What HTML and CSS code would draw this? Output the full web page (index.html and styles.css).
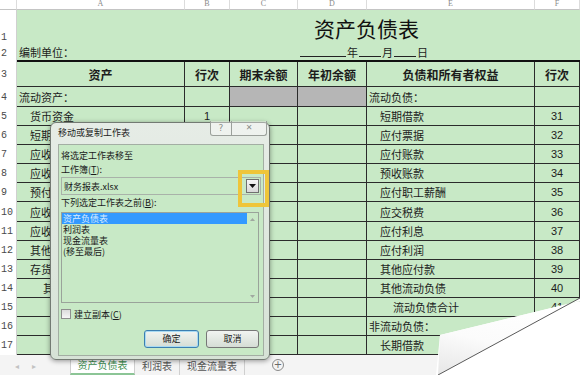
FILE: index.html
```html
<!DOCTYPE html>
<html lang="zh-CN">
<head>
  <meta charset="UTF-8" />
  <meta name="viewport" content="width=device-width, initial-scale=1.0" />
  <link rel="stylesheet" href="styles.css">
</head>
<body>
  <div class="sheet">
    <div class="ch"></div>
    <div class="ch">A</div><div class="ch">B</div><div class="ch">C</div><div class="ch">D</div><div class="ch">E</div><div class="ch">F</div>

    <div class="rh rh-low">1</div>
    <div class="c title">资产负债表</div>

    <div class="rh">2</div>
    <div class="c thick i0">编制单位：</div>
    <div class="c thick"></div>
    <div class="c thick"></div>
    <div class="c thick date"><span class="blank wide"></span>年<span class="blank"></span>月<span class="blank"></span>日</div>
    <div class="c thick"></div>

    <div class="rh">3</div>
    <div class="c b hd">资产</div>
    <div class="c b hd">行次</div>
    <div class="c b hd">期末余额</div>
    <div class="c b hd">年初余额</div>
    <div class="c b hd">负债和所有者权益</div>
    <div class="c b hd">行次</div>

    <div class="rh">4</div>
    <div class="c b i0">流动资产：</div>
    <div class="c b"></div>
    <div class="c b gray"></div>
    <div class="c b gray"></div>
    <div class="c b i0">流动负债：</div>
    <div class="c b"></div>

    <div class="rh">5</div>
    <div class="c b i1">货币资金</div><div class="c b num">1</div><div class="c b"></div><div class="c b"></div>
    <div class="c b i1">短期借款</div><div class="c b num">31</div>

    <div class="rh">6</div>
    <div class="c b i1">短期投资</div><div class="c b num">2</div><div class="c b"></div><div class="c b"></div>
    <div class="c b i1">应付票据</div><div class="c b num">32</div>

    <div class="rh">7</div>
    <div class="c b i1">应收票据</div><div class="c b num">3</div><div class="c b"></div><div class="c b"></div>
    <div class="c b i1">应付账款</div><div class="c b num">33</div>

    <div class="rh">8</div>
    <div class="c b i1">应收账款</div><div class="c b num">4</div><div class="c b"></div><div class="c b"></div>
    <div class="c b i1">预收账款</div><div class="c b num">34</div>

    <div class="rh">9</div>
    <div class="c b i1">预付账款</div><div class="c b num">5</div><div class="c b"></div><div class="c b"></div>
    <div class="c b i1">应付职工薪酬</div><div class="c b num">35</div>

    <div class="rh">10</div>
    <div class="c b i1">应收股利</div><div class="c b num">6</div><div class="c b"></div><div class="c b"></div>
    <div class="c b i1">应交税费</div><div class="c b num">36</div>

    <div class="rh">11</div>
    <div class="c b i1">应收利息</div><div class="c b num">7</div><div class="c b"></div><div class="c b"></div>
    <div class="c b i1">应付利息</div><div class="c b num">37</div>

    <div class="rh">12</div>
    <div class="c b i1">其他应收款</div><div class="c b num">8</div><div class="c b"></div><div class="c b"></div>
    <div class="c b i1">应付利润</div><div class="c b num">38</div>

    <div class="rh">13</div>
    <div class="c b i1">存货</div><div class="c b num">9</div><div class="c b"></div><div class="c b"></div>
    <div class="c b i1">其他应付款</div><div class="c b num">39</div>

    <div class="rh">14</div>
    <div class="c b i2">其中：原材料</div><div class="c b num">10</div><div class="c b"></div><div class="c b"></div>
    <div class="c b i1">其他流动负债</div><div class="c b num">40</div>

    <div class="rh">15</div>
    <div class="c b i3">在产品</div><div class="c b num">11</div><div class="c b"></div><div class="c b"></div>
    <div class="c b i2">流动负债合计</div><div class="c b num">41</div>

    <div class="rh">16</div>
    <div class="c b i3">库存商品</div><div class="c b num">12</div><div class="c b"></div><div class="c b"></div>
    <div class="c b i0">非流动负债：</div><div class="c b num"></div>

    <div class="rh">17</div>
    <div class="c b i3">周转材料</div><div class="c b num">13</div><div class="c b"></div><div class="c b"></div>
    <div class="c b i1">长期借款</div><div class="c b num">42</div>
  </div>

  <div class="tabs">
    <div class="tab-nav"><span>◂</span><span>▸</span></div>
    <div class="tab wide active">资产负债表</div>
    <div class="tab">利润表</div>
    <div class="tab wide">现金流量表</div>
    <div class="tab-add">+</div>
  </div>

  <div class="dialog">
    <div class="caption">
      <span class="caption-title">移动或复制工作表</span>
      <span class="cap-btn help">?</span>
      <span class="cap-btn close">✕</span>
    </div>
    <div class="client">
      <div class="line first">将选定工作表移至</div>
      <div class="line">工作簿(<u>T</u>):</div>
      <div class="combo">
        <span>财务报表.xlsx</span>
        <span class="drop">
          <svg width="7" height="4" viewBox="0 0 7 4"><polygon points="0,0 7,0 3.5,4" fill="#111"/></svg>
        </span>
      </div>
      <div class="line">下列选定工作表之前(<u>B</u>):</div>
      <div class="listbox">
        <div class="items">
          <div class="item selected">资产负债表</div>
          <div class="item">利润表</div>
          <div class="item">现金流量表</div>
          <div class="item">(移至最后)</div>
        </div>
        <div class="scroll">
          <svg width="5" height="3" viewBox="0 0 5 3"><polygon points="0,3 5,3 2.5,0" fill="#a0a8a0"/></svg>
          <svg width="5" height="3" viewBox="0 0 5 3"><polygon points="0,0 5,0 2.5,3" fill="#a0a8a0"/></svg>
        </div>
      </div>
      <div class="check-row">
        <span class="checkbox"></span>
        <span>建立副本(<u>C</u>)</span>
      </div>
      <div class="buttons">
        <span class="btn default">确定</span>
        <span class="btn">取消</span>
      </div>
      <div class="highlight"></div>
    </div>
  </div>

  <svg class="curl" width="145" height="80" viewBox="0 0 145 80">
    <defs>
      <linearGradient id="flap" x1="0" y1="1" x2="0.4" y2="0">
        <stop offset="0" stop-color="#e6e6e6"/>
        <stop offset="0.5" stop-color="#fbfbfb"/>
        <stop offset="1" stop-color="#ffffff"/>
      </linearGradient>
    </defs>
    <polygon points="5,40 145,6 145,80 1,80" fill="#ffffff"/>
    <polygon points="5,40 145,6 145,3 3,80" fill="url(#flap)"/>
    <line x1="3" y1="80" x2="145" y2="3" stroke="#5a5a5a" stroke-width="1"/>
  </svg>
</body>
</html>
```

FILE: styles.css
```css
:root {
  --sheet-green: #c8e9c6;
  --line: #2b2b2b;
  --text: #1c1c1c;
}
body {
  margin: 0;
  width: 580px;
  height: 375px;
  overflow: hidden;
  position: relative;
  background: #f4f4f4;
  font-family: "Noto Sans CJK SC", "Noto Sans", sans-serif;
  color: var(--text);
}

/* 表格 */
.sheet {
  display: grid;
  grid-template-columns: 17px 168px 45px 68px 69px 168px 45px;
  grid-template-rows: 10px 34px 18px 25px 20px repeat(13, 19.1px);
  width: 580px;
  background: var(--sheet-green);
}
.ch {
  background: #ffffff;
  color: #8a8a8a;
  font-family: "Liberation Serif", serif;
  font-size: 8px;
  line-height: 7px;
  text-align: center;
  border-right: 1px solid #dcdcdc;
  border-bottom: 1px solid #c4c4c4;
  box-sizing: border-box;
  overflow: hidden;
}
.rh {
  display: flex;
  align-items: center;
  background: #ffffff;
  color: #4a4a4a;
  font-family: "Liberation Mono", monospace;
  font-size: 10px;
  padding-left: 1px;
  border-right: 1px solid #d0d0d0;
  box-sizing: border-box;
}
.rh-low {
  align-items: flex-end;
  padding-bottom: 1px;
}
.c {
  display: flex;
  align-items: center;
  box-sizing: border-box;
  font-size: 11px;
  white-space: nowrap;
  overflow: hidden;
}
.b {
  border-right: 1px solid var(--line);
  border-bottom: 1px solid var(--line);
}
.thick {
  border-bottom: 2px solid #111;
}
.title {
  grid-column: 2 / 8;
  padding-left: 297px;
  padding-top: 2px;
  font-size: 21px;
  color: #111;
}
.date {
  grid-column: span 2;
  padding-left: 2px;
  align-items: center;
}
.blank {
  display: inline-block;
  width: 22px;
  height: 9px;
  border-bottom: 1px solid #222;
  margin: 0 1px;
}
.blank.wide {
  width: 46px;
  margin-left: 0;
}
.hd {
  justify-content: center;
  font-weight: bold;
  font-size: 12px;
}
.num {
  justify-content: center;
  font-family: "Liberation Sans", sans-serif;
  font-size: 11px;
}
.gray {
  background: #b6b6b6;
}
.i0 { padding-left: 2px; }
.i1 { padding-left: 13px; }
.i2 { padding-left: 26px; }
.i3 { padding-left: 40px; }

/* 工作表标签 */
.tabs {
  display: flex;
  align-items: stretch;
  height: 20px;
  background: #f4f4f4;
  font-size: 10px;
  color: #555;
}
.tab-nav {
  width: 70px;
  display: flex;
  align-items: center;
  gap: 13px;
  padding-left: 15px;
  box-sizing: border-box;
  color: #c2c2c2;
  font-size: 8px;
}
.tab {
  display: flex;
  align-items: center;
  justify-content: center;
  border-right: 1px solid #cfcfcf;
  box-sizing: border-box;
  width: 45px;
  white-space: nowrap;
}
.tab.wide {
  width: 65px;
}
.tab.active {
  background: #ffffff;
  color: #3e8e50;
  border-left: 1px solid #cfcfcf;
  border-bottom: 2px solid #8cc596;
}
.tab-add {
  width: 10px;
  height: 10px;
  margin: 4px 0 0 27px;
  border: 1px solid #8a8a8a;
  border-radius: 50%;
  color: #6a6a6a;
  font-family: "DejaVu Sans", sans-serif;
  font-size: 10px;
  line-height: 10px;
  text-align: center;
}

/* 对话框 */
.dialog {
  position: absolute;
  left: 50px;
  top: 122px;
  width: 220px;
  height: 238px;
  box-sizing: border-box;
  padding: 0 5px 0 7px;
  border: 1px solid #737a73;
  border-radius: 6px;
  background: linear-gradient(#e6ece6, #d6e2d6);
  box-shadow: 0 1px 5px rgba(0, 0, 0, 0.4);
  font-size: 9px;
  color: #1a1a1a;
}
.caption {
  display: flex;
  align-items: flex-start;
  height: 21px;
  margin-right: -3px;
}
.caption-title {
  margin-top: 3px;
  font-size: 9px;
  color: #222;
}
.cap-btn {
  height: 15px;
  margin-top: -2px;
  box-sizing: border-box;
  border: 1px solid #9ba09b;
  border-top: none;
  background: rgba(255, 255, 255, 0.35);
  color: #8a8f8a;
  text-align: center;
  line-height: 14px;
  font-family: "DejaVu Sans", sans-serif;
}
.help {
  margin-left: auto;
  width: 22px;
  border-radius: 0 0 0 3px;
  font-size: 9px;
}
.close {
  width: 35px;
  border-left: none;
  border-radius: 0 0 3px 0;
  font-size: 8px;
}
.client {
  position: relative;
  height: 212px;
  box-sizing: border-box;
  padding: 0 0 0 2px;
  border: 1px solid #a3aea3;
  background: var(--sheet-green);
}
.line {
  height: 12px;
  line-height: 12px;
  margin-top: 2px;
  white-space: nowrap;
}
.line.first {
  margin-top: 5px;
}
.combo {
  display: flex;
  align-items: center;
  width: 200px;
  height: 18px;
  margin-top: 1px;
  padding-left: 2px;
  box-sizing: border-box;
  border: 1px solid #a9b2a9;
}
.drop {
  display: flex;
  align-items: center;
  justify-content: center;
  width: 13px;
  height: 14px;
  margin-left: auto;
  margin-right: 1px;
  box-sizing: border-box;
  border: 1px solid #707070;
  background: linear-gradient(#f6f6f6, #d8d8d8);
}
.listbox {
  display: flex;
  width: 198px;
  height: 91px;
  margin-top: 3px;
  box-sizing: border-box;
  border: 1px solid #9aa39a;
}
.items {
  flex: 1;
}
.item {
  height: 11px;
  line-height: 11px;
  padding-left: 1px;
}
.item.selected {
  background: #3399ff;
  color: #d9ecff;
}
.scroll {
  width: 11px;
  display: flex;
  flex-direction: column;
  align-items: center;
  justify-content: space-between;
  padding: 5px 0 4px;
}
.check-row {
  display: flex;
  align-items: center;
  gap: 3px;
  margin-top: 6px;
  height: 10px;
}
.checkbox {
  width: 10px;
  height: 10px;
  box-sizing: border-box;
  border: 1px solid #8e8e8e;
  background: linear-gradient(#dcdcdc, #f6f6f6);
}
.buttons {
  display: flex;
  gap: 7px;
  margin: 11px 0 0 83px;
}
.btn {
  width: 53px;
  height: 18px;
  box-sizing: border-box;
  border: 1px solid #777;
  border-radius: 3px;
  background: linear-gradient(#f1f4f1, #d5ddd5);
  text-align: center;
  line-height: 16px;
}
.btn.default {
  width: 55px;
  border-color: #3c7fb1;
  box-shadow: inset 0 0 0 1px #a8daf2;
}
.highlight {
  position: absolute;
  left: 179px;
  top: 25px;
  width: 31px;
  height: 37px;
  box-sizing: border-box;
  border: 4px solid #efc53a;
}

/* 翻页角 */
.curl {
  position: absolute;
  right: 0;
  bottom: 0;
}
```
